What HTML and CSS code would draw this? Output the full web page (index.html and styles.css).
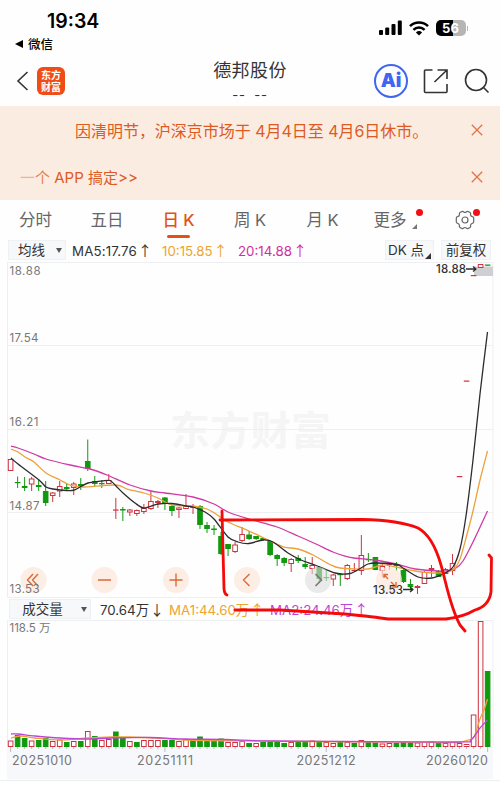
FILE: index.html
```html
<!DOCTYPE html>
<html lang="zh-CN">
<head>
    <meta charset="UTF-8">
    <meta name="viewport" content="width=device-width, initial-scale=1.0">
    <title>德邦股份</title>
    <link rel="stylesheet" href="styles.css">
</head>
<body>
    <div class="status-bar">
        <div class="status-left">
            <div class="clock">19:34</div>
            <div class="back-app"><svg width="8" height="8" viewBox="0 0 8 8"><path d="M8 0v8L0 4z"/></svg>微信</div>
        </div>
        <div class="status-icons">
            <svg width="23" height="16" viewBox="0 0 23 16">
                <rect x="0" y="10" width="4" height="5" rx="1"/>
                <rect x="6.2" y="7.5" width="4" height="7.5" rx="1"/>
                <rect x="12.5" y="4" width="4" height="11" rx="1"/>
                <rect x="18.8" y="0.5" width="4" height="14.5" rx="1"/>
            </svg>
            <svg class="wifi" width="20" height="15" viewBox="0 0 20 15" fill="none" stroke="#000" stroke-width="2.5">
                <path d="M1 5.2a13 13 0 0 1 18 0M4.4 8.8a8 8 0 0 1 11.2 0"/>
                <path d="M10 14.5L6.9 11.4a4.5 4.5 0 0 1 6.2 0z" fill="#000" stroke="none"/>
            </svg>
            <div class="battery">56</div>
            <span class="battery-tip"></span>
        </div>
    </div>

    <div class="header">
        <svg class="back" width="13" height="20" viewBox="0 0 13 20"><path d="M11.5 1L2 10l9.500 9"/></svg>
        <div class="logo"><span>东方</span><span>财富</span></div>
        <div class="title">
            <h1>德邦股份</h1>
            <p>-- --</p>
        </div>
        <div class="ai">Ai</div>
        <svg class="share" width="26" height="26" viewBox="0 0 26 26"><path d="M9.500 2H2.500a1 1 0 0 0-1 1v20.500a1 1 0 0 0 1 1H23a1 1 0 0 0 1-1V16M14.500 2H24v9M24 2L11.500 14"/></svg>
        <svg class="search" width="26" height="26" viewBox="0 0 26 26"><circle cx="12" cy="12" r="10.500"/><path d="M19.500 19.500l5 5"/></svg>
    </div>

    <div class="notice">
        <p class="notice-main">因清明节，沪深京市场于 4月4日至 4月6日休市。</p>
        <svg class="close" width="12" height="12" viewBox="0 0 12 12"><path d="M.8.800l10.400 10.400M11.200.800L.8 11.200"/></svg>
    </div>
    <div class="notice">
        <p class="notice-app"><span class="fade1">一</span><span class="fade2">个</span> APP 搞定&gt;&gt;</p>
        <svg class="close" width="12" height="12" viewBox="0 0 12 12"><path d="M.8.800l10.400 10.400M11.200.800L.8 11.200"/></svg>
    </div>

    <div class="tabs">
        <span>分时</span>
        <span>五日</span>
        <span class="active">日 K</span>
        <span>周 K</span>
        <span>月 K</span>
        <span class="more">更多<i class="corner"></i><i class="dot"></i></span>
        <span class="settings">
            <svg width="20" height="20" viewBox="0 0 20 20"><path d="M6.700 1.600Q8 1 8.700 2q1.300 1 2.600 0 .7-1 2-.4l1.900 1.100q.8.800.3 1.900.2 1.700 1.800 2.100 1.200.2 1.400 1.300v4q-.2 1.100-1.400 1.300-1.600.4-1.800 2.100.5 1.100-.3 1.900l-1.900 1.100q-1.300.6-2-.4-1.300-1-2.600 0-.7 1-2 .4l-1.900-1.100q-.8-.8-.3-1.900-.2-1.700-1.800-2.100Q1.500 13.100 1.300 12V8q.2-1.100 1.400-1.300 1.600-.4 1.800-2.100-.5-1.100.3-1.900z"/><circle cx="10" cy="10" r="3"/></svg>
            <i class="dot"></i>
        </span>
    </div>

    <div class="chart-panel">
        <div class="ma-bar">
            <span class="select ma-select">均线<i class="arrow"></i></span>
            <span class="ma5">MA5:17.76<b>↑</b></span>
            <span class="ma10">10:15.85<b>↑</b></span>
            <span class="ma20">20:14.88<b>↑</b></span>
            <span class="select dk">DK 点<i class="corner"></i></span>
            <span class="select adjust">前复权</span>
        </div>
        <svg id="priceChart" width="500" height="336" viewBox="0 262 500 336"></svg>
        <div class="ma-bar volume-bar">
            <span class="select volume-select">成交量<i class="arrow"></i></span>
            <span class="vol">70.64万<b>↓</b></span>
            <span class="vol1">MA1:44.60万<b>↑</b></span>
            <span class="vol2">MA2:24.46万<b>↑</b></span>
        </div>
        <svg id="volumeChart" width="500" height="160" viewBox="0 620 500 160"></svg>
        <svg class="drawing" width="500" height="390" viewBox="0 262 500 390">
            <path d="M222 511L224 589Q224.500 594 227 595"/>
            <path d="M220 520L362 519.500C386 520 406 523 418 528C431 535 437 551 441 565C446 582 450 607 460 625L465 631"/>
            <path d="M235 610L280 610L345 614Q375 617 388 619L446 619Q463 617 475 610Q489 606 491 592L491.500 558L489 555"/>
        </svg>
    </div>
    <div class="bottom-line"></div>
    <script src="chart.js"></script>
</body>
</html>
```

FILE: styles.css
```css
* {
    box-sizing: border-box;
}
body {
    margin: 0;
    width: 500px;
    height: 788px;
    overflow: hidden;
    background-color: #fefefe;
    color: #333;
    font-family: Inter, "Noto Sans CJK SC", sans-serif;
}
p, h1 {
    margin: 0;
    font-weight: 400;
}
i, b {
    font-style: normal;
    font-weight: 400;
}
.status-bar {
    display: flex;
    justify-content: space-between;
    height: 56px;
    padding: 9px 32px 0 15px;
    color: #000;
}
.clock {
    padding-left: 32px;
    height: 26px;
    font-size: 19.5px;
    line-height: 24px;
    font-weight: 600;
}
.back-app {
    display: flex;
    align-items: center;
    gap: 5px;
    height: 17px;
    font-size: 12.5px;
    font-weight: 500;
}
.status-icons {
    display: flex;
    align-items: center;
    height: 38px;
}
.wifi {
    margin-left: 7px;
}
.battery {
    width: 30px;
    height: 16px;
    margin-left: 7px;
    border-radius: 5px;
    background: linear-gradient(90deg, #000 56%, #b5b5b5 56%);
    color: #fff;
    font-size: 13px;
    font-weight: 700;
    line-height: 16px;
    text-align: center;
}
.battery-tip {
    width: 1.5px;
    height: 5px;
    margin-left: 1px;
    background-color: #b5b5b5;
}
.header {
    display: flex;
    align-items: center;
    height: 50px;
    padding: 0 10px 0 16px;
}
.header svg {
    fill: none;
    stroke: #333;
    stroke-width: 1.6;
}
.logo {
    display: flex;
    flex-direction: column;
    justify-content: center;
    align-items: center;
    width: 28px;
    height: 28px;
    margin-left: 8px;
    border-radius: 6px;
    background-color: #f04c17;
    color: #fff;
    font-family: "Noto Sans CJK SC", sans-serif;
    font-size: 10px;
    font-weight: 700;
    line-height: 12.5px;
}
.title {
    width: 140px;
    height: 50px;
    margin-left: 115px;
    text-align: center;
}
.title h1 {
    margin-top: 1px;
    font-size: 18px;
    letter-spacing: 0.4px;
    line-height: 28px;
}
.title p {
    margin-top: 3px;
    font-size: 13px;
    line-height: 14px;
    letter-spacing: 0.8px;
    word-spacing: 4px;
}
.ai {
    width: 34px;
    height: 34px;
    margin-left: 54px;
    border: 2px solid #3f66ee;
    border-radius: 50%;
    color: #3f66ee;
    font-size: 19px;
    font-weight: 900;
    line-height: 29px;
    text-align: center;
}
.share {
    margin-left: 15px;
}
.search {
    margin-left: 15px;
}
.notice {
    display: flex;
    justify-content: space-between;
    align-items: center;
    height: 47px;
    padding: 0 17px 0 20px;
    background-color: #fbece2;
    color: #dd5b22;
    font-size: 16px;
}
.notice-main {
    padding-left: 55px;
    letter-spacing: -0.03px;
}
.notice-app {
    font-size: 15px;
}
.fade1 {
    opacity: 0.4;
}
.fade2 {
    opacity: 0.75;
}
.close {
    fill: none;
    stroke: #e07446;
    stroke-width: 1.3;
}
.tabs {
    display: grid;
    grid-template-columns: 71px 72px 71px 72px 73px 77px 56px;
    height: 40px;
    color: #666;
    font-size: 16.5px;
    line-height: 41px;
    text-align: center;
}
.tabs span {
    position: relative;
}
.tabs .active {
    color: #e25313;
    font-weight: 500;
}
.active::after {
    content: "";
    position: absolute;
    left: 24px;
    bottom: 3px;
    width: 23px;
    height: 3.5px;
    border-radius: 2px;
    background-color: #e25313;
}
.more {
    padding-right: 15px;
}
.corner {
    width: 0;
    height: 0;
    border-left: 6px solid transparent;
    border-bottom: 6px solid #333;
}
.more .corner {
    position: absolute;
    left: 53px;
    top: 24px;
    border-width: 5px;
    border-right: 0;
    border-top: 0;
    border-bottom-color: #777;
}
.dot {
    position: absolute;
    left: 57px;
    top: 9px;
    width: 7px;
    height: 7px;
    border-radius: 50%;
    background-color: #f50d16;
}
.settings svg {
    display: block;
    margin: 10px 0 0 19px;
    fill: none;
    stroke: #666;
    stroke-width: 1.2;
}
.settings .dot {
    left: 37px;
}
.chart-panel {
    position: relative;
}
.chart-panel > svg {
    display: block;
}
.ma-bar {
    display: flex;
    height: 22px;
    padding: 0 9px 0 8px;
    font-size: 13.3px;
    line-height: 20px;
    white-space: nowrap;
}
.ma-bar b {
    margin-left: 1px;
    font-family: "Noto Sans CJK SC", sans-serif;
    font-size: 14px;
}
.select {
    display: flex;
    align-items: center;
    justify-content: center;
    height: 20px;
    border: 1px solid #eff0f3;
    background-color: #f7f8fa;
    font-size: 13.5px;
}
.arrow {
    border: 3px solid transparent;
    border-top: 5px solid #555;
    border-bottom: 0;
}
.ma-select {
    width: 58px;
    gap: 11px;
    padding-left: 6px;
}
.ma5 {
    width: 90px;
    margin-left: 6px;
    letter-spacing: 0.15px;
}
.ma10 {
    width: 76px;
    color: #eda52f;
}
.ma20 {
    width: 147px;
    color: #d12e9e;
}
.dk {
    width: 49px;
    gap: 1px;
}
.dk .corner {
    align-self: flex-end;
}
.adjust {
    width: 50px;
    margin-left: 7px;
}
.volume-bar {
    padding: 1px 0 0 9px;
}
.volume-select {
    width: 82px;
    gap: 18px;
    padding-left: 9px;
}
.vol {
    width: 69px;
    margin-left: 9px;
}
.vol1 {
    width: 101px;
    color: #eda52f;
}
.vol2 {
    color: #bd45d6;
}
.drawing {
    position: absolute;
    left: 0;
    top: 22px;
    fill: none;
    stroke: #f50a0a;
    stroke-width: 2.8;
    stroke-linecap: round;
    stroke-linejoin: round;
}
.bottom-line {
    height: 8px;
    border-top: 1px solid #eee;
    background-color: #fff;
}
.grid {
    stroke: #eeeff2;
    stroke-width: 1;
    fill: none;
}
.axis-text {
    fill: #777;
    font-size: 11.5px;
}
.date-text {
    fill: #777;
    font-size: 12.5px;
}
.value-text {
    fill: #333;
    font-size: 11.5px;
    font-weight: 500;
}
.watermark {
    fill: #f5f5f5;
    font-family: "Noto Sans CJK SC", sans-serif;
    font-size: 40px;
    font-weight: 700;
}
.up {
    fill: #fff;
    stroke: #cf3341;
}
.up-line {
    stroke: #cf3341;
}
.down {
    fill: #10990f;
    stroke: #10990f;
}
.down-line {
    stroke: #10990f;
}
.line {
    fill: none;
    stroke-width: 1.3;
    stroke-linejoin: round;
}
.black {
    stroke: #2c2c30;
}
.yellow {
    stroke: #eda03c;
}
.pink {
    stroke: #d03aa4;
}
.purple {
    stroke: #bd45d6;
}
.tool {
    fill: #fbe6da;
    fill-opacity: 0.7;
}
.tool-off {
    fill: #dcdcdc;
    fill-opacity: 0.6;
}
.tool-icon {
    fill: none;
    stroke: #dd6a35;
    stroke-width: 1.4;
}
.tool-icon-off {
    fill: none;
    stroke: #777;
    stroke-width: 1.6;
}
```

FILE: chart.js
```javascript
const priceChart = document.getElementById('priceChart');
const volumeChart = document.getElementById('volumeChart');
const x = i => 10.6 + i * 7.015;

// direction, high, body top, body bottom, low, volume top
const days = [
    ['r', 459, 459, 471, 471, 740.5], ['g', 476.5, 482, 483, 488, 735],
    ['g', 477, 486, 488, 491, 738], ['r', 477, 478.5, 484.5, 491, 740.5],
    ['g', 479, 485, 487, 491, 740], ['g', 481, 491, 503, 506, 738],
    ['r', 492, 492.5, 496, 502, 741], ['r', 481, 486, 491.5, 497, 739.5],
    ['g', 484, 487, 489, 490, 742], ['r', 482, 483.5, 488, 495, 741],
    ['g', 478, 484, 486, 490, 741], ['g', 439.5, 461, 469, 471, 731, 'r'],
    ['g', 476, 481, 484, 486, 736], ['g', 480, 483, 484, 488, 740, 'r'],
    ['r', 474, 480, 484, 484, 739], ['r', 498, 509.5, 510.5, 519, 731.5, 'g'],
    ['g', 507, 509, 510.5, 521, 738], ['r', 509, 509.5, 512.5, 516, 741],
    ['r', 509.5, 510, 514, 516, 742, 'g'], ['r', 504, 508, 512, 514, 740],
    ['r', 491, 501, 509, 510, 740], ['r', 500, 501, 503, 508, 740],
    ['g', 497, 497.5, 503, 510, 740], ['g', 505, 506, 511, 516, 740],
    ['r', 507, 507.5, 510, 518, 741], ['r', 494, 506, 509, 509, 739],
    ['r', 504, 506, 508, 514, 740, 'g'], ['g', 505, 506, 525, 529, 736.5],
    ['g', 522, 525, 529, 533, 741], ['g', 525, 528.5, 530, 535, 741],
    ['g', 532, 536, 554, 555, 738.5], ['g', 544, 544, 549, 556, 742, 'r'],
    ['r', 542, 544.5, 552, 553, 742], ['r', 527, 534, 541, 542, 741],
    ['g', 531, 534.5, 539, 540, 743], ['g', 536, 536, 539, 540, 743, 'r'],
    ['g', 537, 538, 540, 541, 742], ['g', 540, 541, 555, 556, 742],
    ['g', 554, 555, 559, 566, 742], ['g', 557, 558, 563, 566, 743],
    ['r', 558, 559, 564, 572, 742], ['g', 555, 558, 561, 563, 742],
    ['g', 557, 564, 567, 569, 742], ['r', 557, 565, 569, 574, 740.5],
    ['g', 566, 567, 579, 582, 741], ['g', 570, 577, 578, 581, 742, 'r'],
    ['r', 574, 574.5, 579.5, 586, 743], ['g', 573, 574, 575, 586, 742],
    ['r', 564, 565, 579, 580, 742], ['r', 563, 570, 571, 572, 743, 'g'],
    ['r', 535, 555, 571, 575, 740], ['g', 553, 559, 560, 562, 742],
    ['g', 557, 557, 570, 570, 742.5], ['r', 563, 566, 571, 577, 743.5],
    ['r', 562, 563, 565, 570, 743], ['g', 562, 564, 566, 571, 743],
    ['g', 568, 570, 582, 583, 742], ['g', 579, 584, 587, 589, 742.5],
    ['r', 585, 586, 588, 594, 742.5], ['r', 571, 572, 584, 584, 742],
    ['r', 565, 568, 570, 577, 741.5], ['g', 570, 571, 577, 577, 742],
    ['r', 568, 569, 574, 574, 743], ['r', 554, 563, 571, 575, 742],
    ['r', 476.5, 476, 477, 477, 743], ['r', 381, 380.5, 381.5, 381.5, 744],
    ['r', 275.5, 275, 276, 276, 714.5], ['r', 264.5, 264, 268, 268, 621],
    ['g', 265, 264.5, 265.5, 265.5, 671]
];

function bar(i, dir, top, bottom) {
    const height = Math.max(bottom - top - 1, 0.2);
    return `<rect class="${dir === 'r' ? 'up' : 'down'}" x="${x(i) - 2.3}" y="${top + 0.5}" width="4.6" height="${height}"/>`;
}

function candle(d, i) {
    const cls = d[0] === 'r' ? 'up-line' : 'down-line';
    return `<path class="${cls}" d="M${x(i)} ${d[1]}V${d[4]}"/>` + bar(i, d[0], d[2], d[3]);
}

// Smooth line through the points
function curve(points, cls) {
    let d = `M${points[0]}`;
    for (let i = 0; i < points.length - 1; i++) {
        const p0 = points[i - 1] || points[i];
        const p1 = points[i];
        const p2 = points[i + 1];
        const p3 = points[i + 2] || p2;
        d += `C${p1[0] + (p2[0] - p0[0]) / 7} ${p1[1] + (p2[1] - p0[1]) / 7} ${p2[0] - (p3[0] - p1[0]) / 7} ${p2[1] - (p3[1] - p1[1]) / 7} ${p2}`;
    }
    return `<path class="line ${cls}" d="${d}"/>`;
}

const ma5 = [[11, 458], [18, 464], [39, 480], [46, 487], [53, 489], [72, 490.5], [80, 487], [88, 483], [102, 481], [110, 480.5], [116, 486], [123, 493], [135, 503], [144, 508], [158, 504], [172, 503.5], [186, 506], [193, 507], [205, 512], [214, 519], [228, 537], [238, 542], [249, 543.5], [263, 540], [273, 542], [288, 553], [301, 560], [315, 565], [335, 573], [350, 573.5], [361, 568], [368, 564], [377, 563], [397, 564.5], [403, 568], [418, 577], [432, 578], [445, 573], [453, 567], [460, 549], [466, 516], [473, 460], [480, 394], [487.5, 332]];
const ma10 = [[11, 449], [18, 452], [25, 457], [34, 462], [46, 473], [60, 480], [70, 485], [82, 487], [116, 485], [127, 489], [144, 493], [158, 498], [172, 505], [193, 506], [207, 509], [216, 514], [228, 522], [249, 531], [270, 541], [284, 547], [298, 549], [313, 555], [329, 564], [340, 568], [368, 569], [382, 565], [396, 567], [415, 571], [437, 573], [453, 570], [460, 559], [466, 538], [473, 511], [480, 480], [487.5, 451]];
const ma20 = [[11, 446], [18, 448], [34, 454], [46, 459], [70, 465], [90, 469], [107, 475], [130, 485], [151, 491], [165, 493], [193, 497], [214, 504], [228, 512], [249, 519], [277, 527], [298, 536], [316, 544], [333, 552], [345, 556], [354, 558], [375, 560], [396, 564], [415, 569], [445, 571], [456, 568], [463, 561], [473, 542], [487.5, 511]];

priceChart.innerHTML = `
    <text class="watermark" x="170" y="445" textLength="161">东方财富</text>
    <path class="grid" d="M7.5 262V597.5H493V262M7.5 262.500H493M7.5 345.500H493M7.5 429.500H493M7.5 512.500H493"/>
    <rect x="474" y="266.500" width="19" height="9.500" fill="#d0d0d4"/>
    ${days.map(candle).join('')}
    ${curve(ma20, 'pink')}${curve(ma10, 'yellow')}${curve(ma5, 'black')}
    <text class="value-text" x="436" y="273" textLength="30">18.88</text>
    <path class="line black" d="M466 269H476M473 266.500L476 269L473 271.500"/>
    <g class="tool">
        <circle cx="33.500" cy="580" r="13"/><circle cx="104.500" cy="580" r="13"/>
        <circle cx="176" cy="580" r="13"/><circle cx="247" cy="580" r="13"/><circle cx="389" cy="580" r="13"/>
    </g>
    <circle class="tool-off" cx="318" cy="580" r="13"/>
    <path class="tool-icon" d="M33 574L27.500 580L33 586M38 574L32.500 580L38 586M98 580H111M169.500 580H182.500M176 573.500V586.500M249.500 574L243.500 580L249.500 586M388 579L384 574.500M384 578V574.500H388M391 582L396 587M391.500 587H396V582"/>
    <path class="tool-icon-off" d="M315.500 574L321.500 580L315.500 586"/>
    <text class="axis-text" x="9.500" y="275" textLength="31">18.88</text>
    <text class="axis-text" x="9.500" y="342" textLength="29">17.54</text>
    <text class="axis-text" x="9.500" y="426" textLength="29">16.21</text>
    <text class="axis-text" x="9.500" y="509.500" textLength="30">14.87</text>
    <text class="axis-text" x="9.500" y="593" textLength="30">13.53</text>
    <text class="value-text" x="373" y="594" textLength="30">13.53</text>
    <path class="line black" d="M403 589.500H413M410 587L413 589.500L410 592"/>`;

const ticks = days.map((d, i) => `M${x(i)} 747v${[0, 22, 45, 68].includes(i) ? 5 : 2}`).join('');
const vol1 = [[11, 738], [20, 736], [35, 738], [60, 740], [88, 738], [112, 737], [130, 737], [155, 738], [185, 740], [250, 741], [310, 741.5], [400, 742], [455, 742.5], [468, 740], [474, 737], [480, 719], [484, 710], [487.5, 699]];
const vol2 = [[11, 734], [18, 734], [35, 736], [60, 738], [88, 739], [112, 738], [150, 737.5], [185, 739], [225, 739.5], [270, 741], [345, 741.5], [460, 742], [471, 740], [480, 728], [487.5, 720]];
volumeChart.innerHTML = `
    <rect x="7" y="747" width="486" height="32" fill="#f7f8fb"/>
    <path class="grid" d="M7.5 746.500V620.500H493V746.500"/>
    <text class="axis-text" x="9.500" y="632" textLength="41">118.5 万</text>
    ${days.map((d, i) => bar(i, d[6] || d[0], d[5], 747)).join('')}
    <path d="${ticks}" stroke="#bbb"/>
    ${curve(vol1, 'yellow')}${curve(vol2, 'purple')}
    <text class="date-text" x="12" y="765" textLength="60">20251010</text>
    <text class="date-text" x="137" y="765" textLength="56">20251111</text>
    <text class="date-text" x="296.500" y="765" textLength="59">20251212</text>
    <text class="date-text" x="426" y="765" textLength="62">20260120</text>`;
```
